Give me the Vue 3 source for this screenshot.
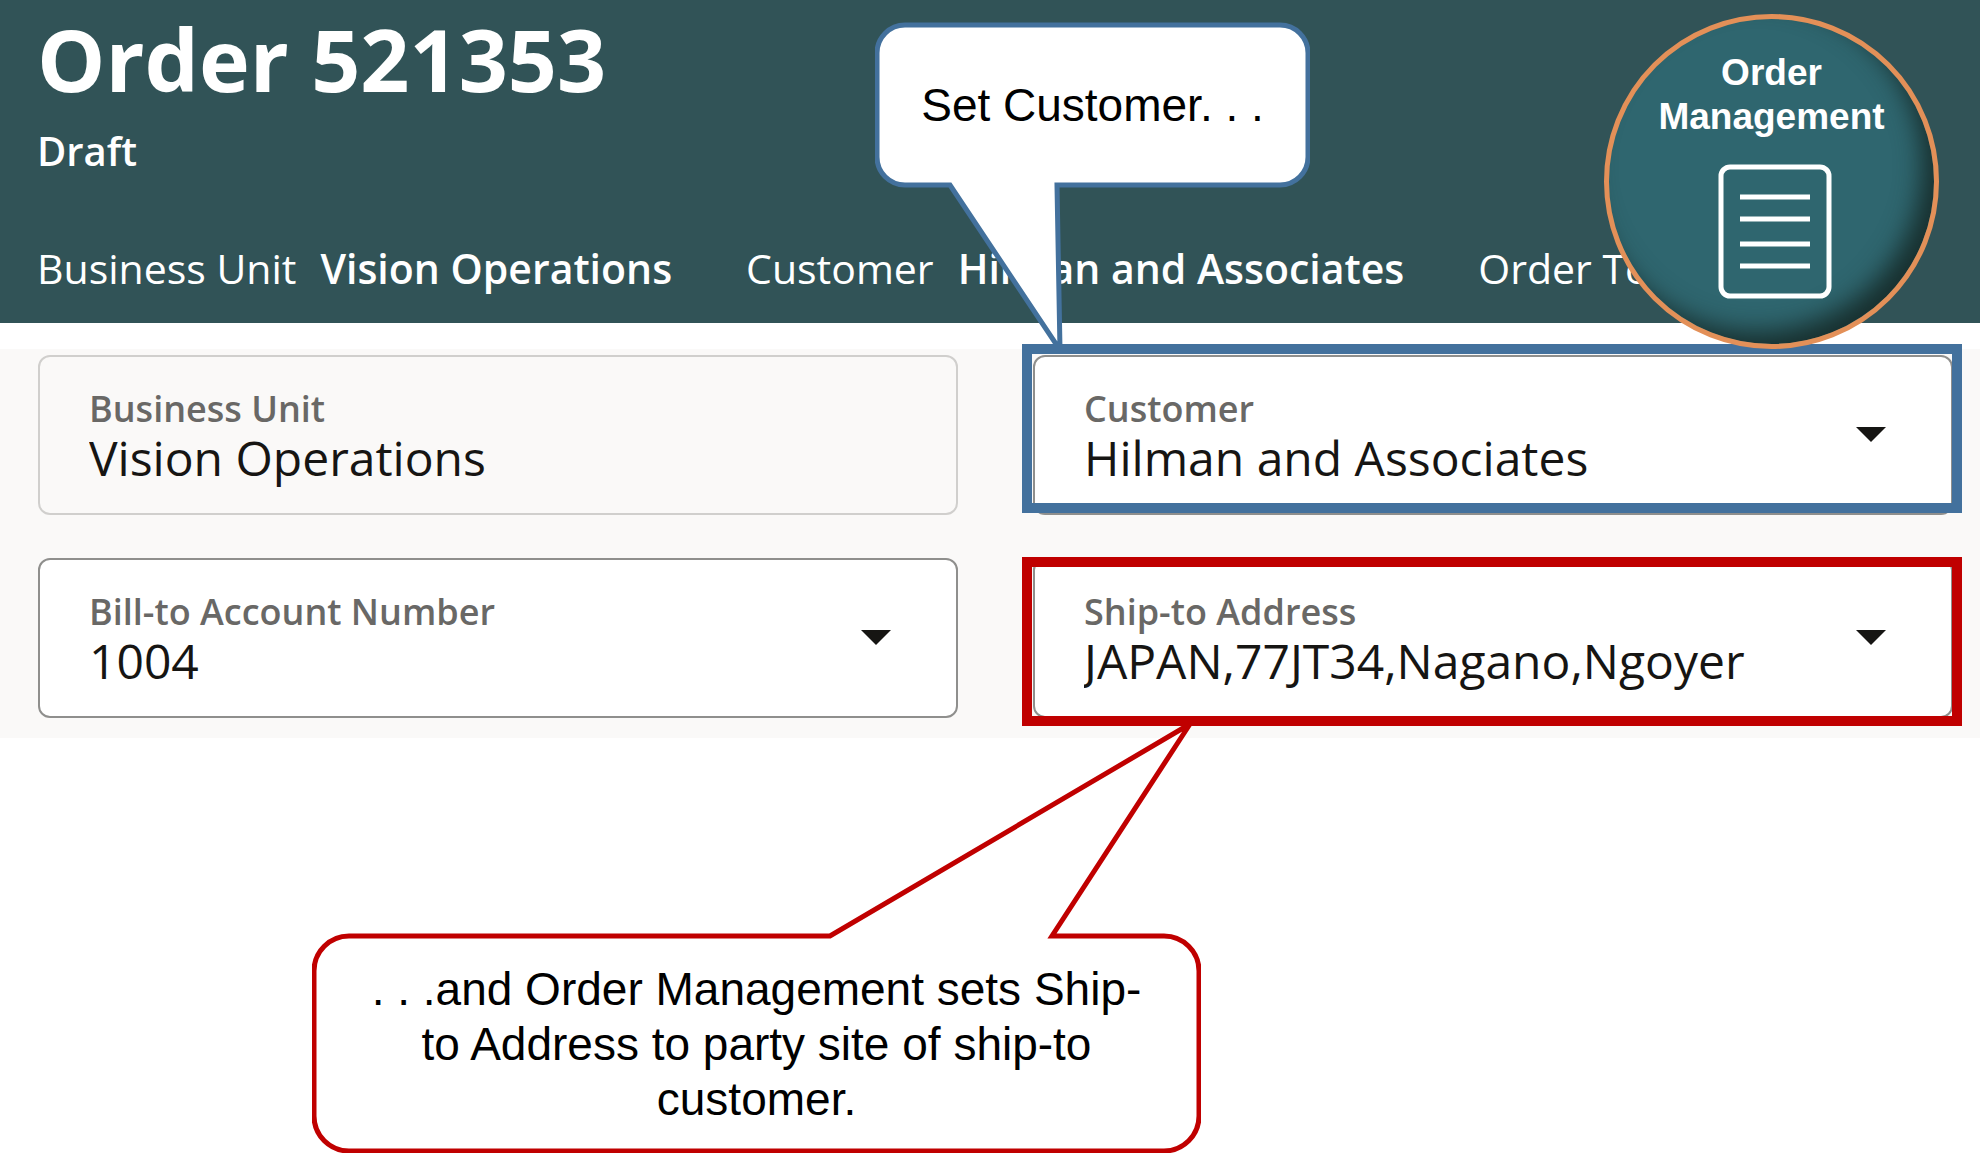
<script setup>
import { ref } from 'vue'

const title = 'Order 521353'
const status = 'Draft'

const summary = [
  { label: 'Business Unit', value: 'Vision Operations' },
  { label: 'Customer', value: 'Hilman and Associates' },
  { label: 'Order Total', value: '' },
]

const businessUnit = ref('Vision Operations')
const customer = ref('Hilman and Associates')
const billTo = ref('1004')
const shipTo = ref('JAPAN,77JT34,Nagano,Ngoyer')
</script>

<template>
  <div class="page">
    <header class="header">
      <h1 class="title">{{ title }}</h1>
      <p class="status">{{ status }}</p>
      <dl class="summary">
        <div v-for="item in summary" :key="item.label" class="summary-item">
          <dt>{{ item.label }}</dt>
          <dd v-if="item.value">{{ item.value }}</dd>
        </div>
      </dl>

      <div class="badge">
        <p class="badge-text">Order<br />Management</p>
        <svg class="badge-icon" viewBox="0 0 114 136" aria-hidden="true">
          <rect x="3" y="3" width="108" height="129" rx="9" />
          <path d="M22 33H92M22 55H92M22 80H92M22 102H92" />
        </svg>
      </div>
    </header>

    <main class="panel">
      <div class="cell">
        <div class="field readonly">
          <div class="field-body">
            <label for="business-unit">Business Unit</label>
            <input id="business-unit" v-model="businessUnit" type="text" readonly />
          </div>
        </div>
      </div>

      <div class="cell">
        <div class="field">
          <div class="field-body">
            <label for="customer">Customer</label>
            <select id="customer" v-model="customer">
              <option>Hilman and Associates</option>
            </select>
          </div>
          <svg class="arrow" viewBox="0 0 30 15" aria-hidden="true"><path d="M0 0H30L15 15Z" /></svg>
        </div>
        <div class="callout callout-customer">
          <svg class="callout-shape" viewBox="0 0 435 330" aria-hidden="true">
            <path d="M30 3H405A28 28 0 0 1 433 31V135A28 28 0 0 1 405 163H182L185 328L75 163H30A28 28 0 0 1 2 135V31A28 28 0 0 1 30 3Z" />
          </svg>
          <p class="callout-text">Set Customer. . .</p>
        </div>
        <div class="frame frame-blue"></div>
      </div>

      <div class="cell">
        <div class="field">
          <div class="field-body">
            <label for="bill-to">Bill-to Account Number</label>
            <select id="bill-to" v-model="billTo">
              <option>1004</option>
            </select>
          </div>
          <svg class="arrow" viewBox="0 0 30 15" aria-hidden="true"><path d="M0 0H30L15 15Z" /></svg>
        </div>
      </div>

      <div class="cell">
        <div class="field">
          <div class="field-body">
            <label for="ship-to">Ship-to Address</label>
            <select id="ship-to" v-model="shipTo">
              <option>JAPAN,77JT34,Nagano,Ngoyer</option>
            </select>
          </div>
          <svg class="arrow" viewBox="0 0 30 15" aria-hidden="true"><path d="M0 0H30L15 15Z" /></svg>
        </div>
        <div class="frame frame-red"></div>
      </div>
    </main>

    <aside class="callout callout-ship">
      <svg class="callout-shape" viewBox="0 0 889 433" aria-hidden="true">
        <path d="M37 216H518L878 4L740 216H852A35 35 0 0 1 887 251V396A35 35 0 0 1 852 431H37A35 35 0 0 1 2 396V251A35 35 0 0 1 37 216Z" />
      </svg>
      <p class="callout-text">. . .and Order Management sets Ship-<br />to Address to party site of ship-to<br />customer.</p>
    </aside>
  </div>
</template>

<style>
body {
  margin: 0;
  background: #fff;
}
</style>

<style scoped>
.page {
  font-family: 'Open Sans', 'Noto Sans', sans-serif;
  color: #161513;
}

.header {
  position: relative;
  padding: 7px 37px 27px;
  background: #315357;
  color: #fff;
}

.title {
  margin: 0 0 14px;
  font-size: 86px;
  line-height: 104px;
  font-weight: 700;
}

.status {
  margin: 0 0 63px;
  font-size: 40px;
  line-height: 52px;
  font-weight: 600;
}

.summary {
  display: flex;
  gap: 74px;
  margin: 0;
  font-size: 41px;
  line-height: 56px;
  white-space: nowrap;
}

.summary-item {
  display: flex;
  gap: 24px;
}

.summary dd {
  margin: 0;
  font-weight: 600;
}

.badge {
  position: absolute;
  z-index: 3;
  top: 14px;
  right: 41px;
  box-sizing: border-box;
  width: 335px;
  height: 335px;
  padding-top: 32px;
  display: flex;
  flex-direction: column;
  align-items: center;
  border: 5px solid #e39058;
  border-radius: 50%;
  background: #2f666f;
  box-shadow: inset -16px -16px 24px -4px #18302f;
}

.badge-text {
  margin: 0 0 25px;
  font-family: 'Liberation Sans', Arial, sans-serif;
  font-size: 37px;
  line-height: 44px;
  font-weight: 700;
  text-align: center;
}

.badge-icon {
  width: 114px;
  height: 136px;
  margin-left: 6px;
  fill: none;
  stroke: #fff;
  stroke-width: 5;
}

.panel {
  display: grid;
  grid-template-columns: 1fr 1fr;
  gap: 43px 75px;
  margin-top: 26px;
  padding: 6px 27px 20px 38px;
  background: #faf9f8;
}

.cell {
  position: relative;
  min-width: 0;
}

.field {
  box-sizing: border-box;
  height: 160px;
  padding: 0 65px 0 49px;
  display: flex;
  align-items: center;
  gap: 24px;
  border: 2px solid #8f8f8d;
  border-radius: 12px;
  background: #fff;
}

.field.readonly {
  border-color: #d0cfcd;
  background: #faf9f8;
}

.field-body {
  flex: 1;
  min-width: 0;
  padding-top: 4px;
  display: flex;
  flex-direction: column;
}

label {
  font-size: 36px;
  line-height: 48px;
  font-weight: 600;
  color: #696866;
}

/* The side padding leaves room for glyphs that reach past their origin, such as J. */
input,
select {
  appearance: none;
  box-sizing: border-box;
  height: 64px;
  margin: -7px -4px 0;
  padding: 0 4px;
  border: 0;
  background: transparent;
  font-family: inherit;
  font-size: 48px;
  line-height: 64px;
  color: #161513;
}

.arrow {
  flex: none;
  width: 30px;
  height: 15px;
  margin-bottom: 2px;
  fill: #161513;
}

.frame {
  position: absolute;
  z-index: 2;
  left: -11px;
  right: -9px;
  border: 10px solid;
  pointer-events: none;
}

.frame-blue {
  top: -11px;
  bottom: 2px;
  border-color: #43719d;
}

.frame-red {
  top: -1px;
  bottom: -8px;
  border-color: #c00000;
}

.callout {
  font-family: 'Liberation Sans', Arial, sans-serif;
  font-size: 46px;
  line-height: 55px;
  text-align: center;
  white-space: nowrap;
  color: #000;
}

.callout-customer {
  position: absolute;
  z-index: 1;
  left: -158px;
  top: -333px;
  width: 435px;
  height: 330px;
}

.callout-ship {
  position: relative;
  z-index: 1;
  width: 889px;
  margin: 195px 0 0 312px;
  padding: 29px 0 26px;
}

.callout-shape {
  position: absolute;
  left: 0;
  bottom: 0;
  width: 100%;
  height: auto;
  fill: #fff;
  stroke-width: 5;
}

.callout-customer .callout-shape {
  stroke: #43719d;
}

.callout-ship .callout-shape {
  stroke: #c00000;
}

.callout-text {
  position: relative;
  margin: 0;
}

.callout-customer .callout-text {
  padding-top: 56px;
}
</style>
